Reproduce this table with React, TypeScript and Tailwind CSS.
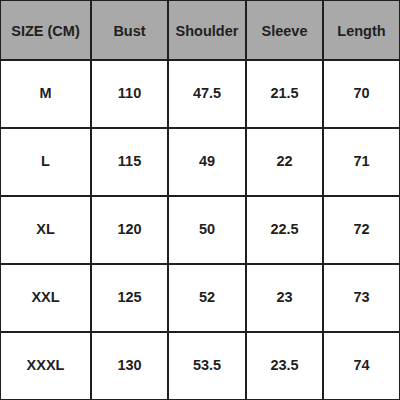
import React from 'react';

const headers = ['SIZE (CM)', 'Bust', 'Shoulder', 'Sleeve', 'Length'];

const rows = [
  ['M', '110', '47.5', '21.5', '70'],
  ['L', '115', '49', '22', '71'],
  ['XL', '120', '50', '22.5', '72'],
  ['XXL', '125', '52', '23', '73'],
  ['XXXL', '130', '53.5', '23.5', '74'],
];

export default function App() {
  return (
    <div className="w-[400px] h-[400px] bg-white">
      <div
        className="grid w-[400px] h-[400px] gap-[2px] p-[1px] bg-[#1f1f1f] grid-cols-[89px_75px_76px_75px_75px] grid-rows-[58px_66px_66px_66px_66px_66px] text-[14.5px] font-bold text-[#1f1f1f]"
        style={{ fontFamily: '"Liberation Sans", Arial, sans-serif' }}
      >
        {headers.map((h) => (
          <div key={h} className="flex items-center justify-center bg-[#a9a9a9] pt-[3px]">
            {h}
          </div>
        ))}
        {rows.map((row, i) =>
          row.map((cell, j) => (
            <div key={`${i}-${j}`} className="flex items-center justify-center bg-white">
              {cell}
            </div>
          ))
        )}
      </div>
    </div>
  );
}
